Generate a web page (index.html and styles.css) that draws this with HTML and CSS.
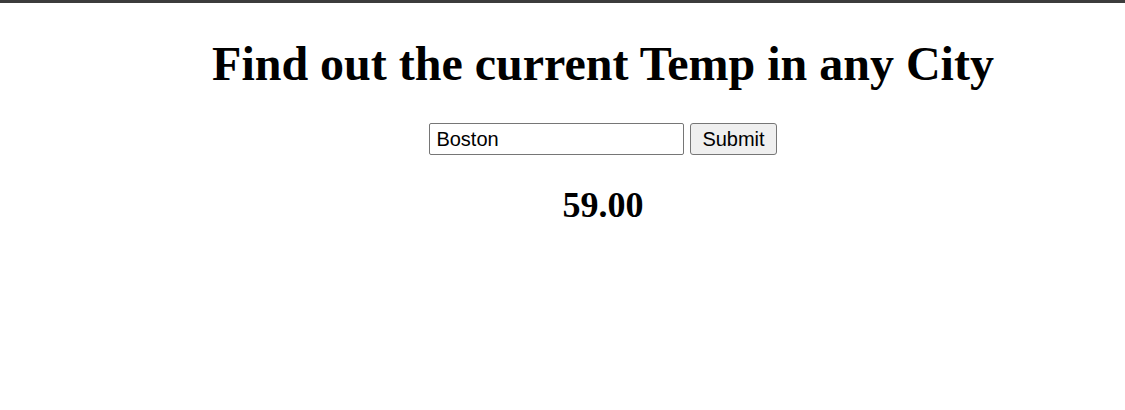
FILE: index.html
```html
<!DOCTYPE html>
<html>
<head>
<meta charset="utf-8">
<link rel="stylesheet" href="styles.css">
</head>
<body>
<div class="topbar"></div>
<main class="page">
  <h1 class="title">Find out the current Temp in any City</h1>
  <form class="search">
    <input class="city" type="text" value="Boston">
    <button class="submit" type="button">Submit</button>
  </form>
  <h2 class="temp">59.00</h2>
</main>
</body>
</html>
```
FILE: styles.css
```css
html, body {
  margin: 0;
  padding: 0;
  background: #ffffff;
  overflow: hidden;
}
body {
  font-family: "Liberation Serif", "Times New Roman", serif;
  color: #000;
}
.topbar {
  height: 3px;
  background: #3c3c3c;
}
.page {
  padding: 0 8px 0 89px;
  display: flex;
  flex-direction: column;
  align-items: center;
}
.title {
  font-size: 48px;
  font-weight: bold;
  margin: 33px 0 0 0;
  line-height: 1.15;
}
.search {
  display: flex;
  gap: 6px;
  margin-top: 32px;
}
.city {
  width: 255px;
  height: 32px;
  box-sizing: border-box;
  border: 1px solid #767676;
  border-radius: 2px;
  padding: 0 6px;
  font-family: "Liberation Sans", Arial, sans-serif;
  font-size: 20px;
  color: #000;
}
.submit {
  height: 32px;
  box-sizing: border-box;
  border: 1px solid #767676;
  border-radius: 3px;
  background: #efefef;
  padding: 0 11px;
  font-family: "Liberation Sans", Arial, sans-serif;
  font-size: 20px;
  color: #000;
}
.temp {
  font-size: 36px;
  font-weight: bold;
  margin: 30px 0 0 0;
  line-height: 1.15;
}
```
